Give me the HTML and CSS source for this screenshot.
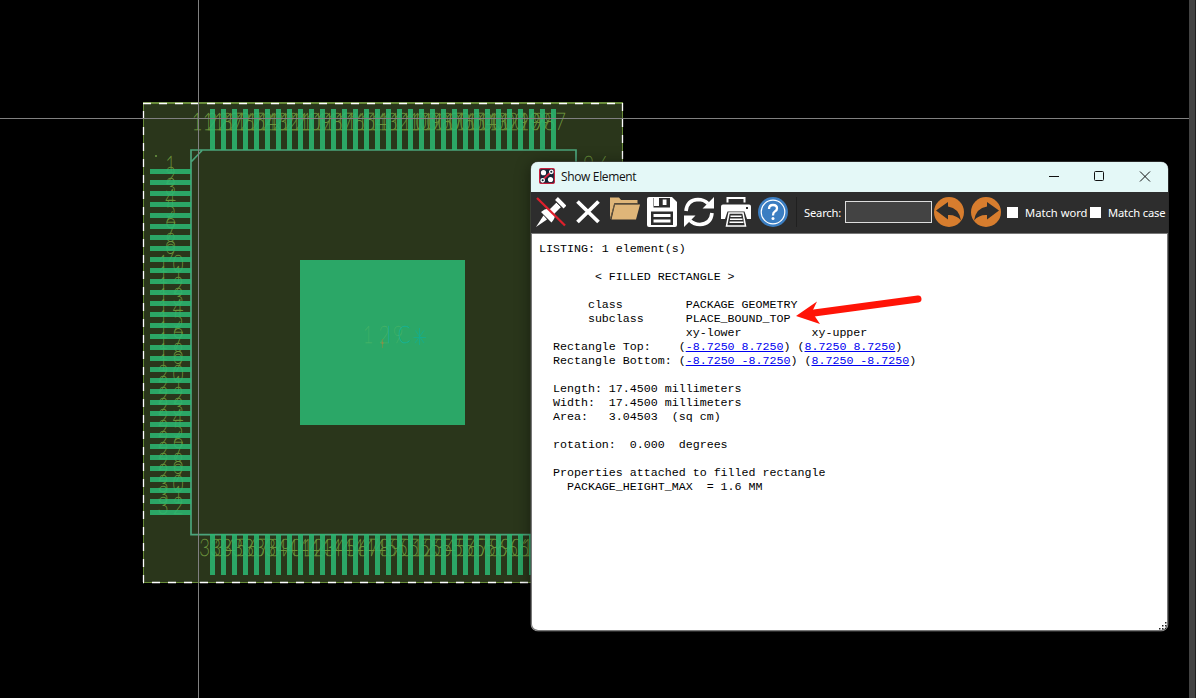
FILE: index.html
```html
<!DOCTYPE html>
<html lang="en">
<head>
<meta charset="utf-8">
<title>Show Element</title>
<link rel="stylesheet" href="styles.css">
</head>
<body>
<main class="workspace">
  <svg class="board" viewBox="0 0 1196 698" width="1196" height="698">
    <rect x="143" y="102" width="480" height="481" fill="#2a361b"/>
    <path class="edge" d="M143 102.5H623M143.5 102V582M622.5 102V582M143 582.5H623"/>
    <path class="edge" d="M143 103.5H623"/>
    <path class="dash" d="M143 103.5H623"/>
    <path class="dash" stroke-dashoffset="8" d="M143.5 103V582"/>
    <path class="dash" d="M622.5 103V582"/>
    <path class="dash" stroke-dashoffset="7" d="M143 582.5H623"/>
    <g id="labels" class="labels"></g>
    <path class="outline" d="M191 150H576V534.7H191ZM191.5 161.500L202 150.500"/>
    <g id="pads" class="pads"></g>
    <rect x="155" y="155" width="2" height="2" fill="#5b8138"/>
    <rect x="300" y="260" width="165" height="165" fill="#2ba767"/>
    <g class="center-text">
      <text class="refdes" transform="scale(.75 1)" x="490.7 512 530.7" y="343">129</text>
      <text class="part" transform="scale(.75 1)" x="518.7 539" y="343">IC</text>
      <path d="M419.500 328V345M413.500 337.500H426M415.500 330.500L424 343M424 330.500L415 343" fill="none" stroke="#13af90" stroke-width=".8"/>
      <path d="M382.500 339V348" stroke="#64974f"/><circle cx="382.500" cy="343" r="1.200" fill="#84914a"/>
    </g>
    <path class="cursor" d="M198.500 0V698M0 118.500H1189"/>
  </svg>
  <div class="scroll-edge"></div>

  <section class="window">
    <header class="titlebar">
      <svg width="16" height="16" viewBox="0 0 16 16"><rect x=".6" y=".6" width="14.800" height="14.800" rx="1.500" fill="#112637" stroke="#c7203d" stroke-width="1.200"/><path d="M4.500 11L11.500 4.500" stroke="#d4213c" stroke-width="1.800"/><circle cx="4.500" cy="4.700" r="2.600" fill="#fff"/><circle cx="11.500" cy="11.500" r="2.600" fill="#fff"/><g fill="#112637" stroke="#fff" stroke-width="1.300"><circle cx="12.300" cy="3.800" r="1.700"/><circle cx="3.700" cy="12.300" r="1.700"/></g></svg>
      <h1>Show Element</h1>
      <svg class="controls" width="110" height="14" viewBox="0 0 110 14"><path d="M4 7.500H14M95 2.500L105 12.500M105 2.500L95 12.500"/><rect x="49.500" y="2.500" width="9" height="9" rx="1"/></svg>
    </header>
    <div class="toolbar">
      <svg class="tool" viewBox="0 0 30 30"><path d="M0 30L7.500 18.500L11 22.500Z" fill="#fff"/><path d="M5 15Q10 10.500 14 12L20.500 5.500L25 10L18.500 16.500Q20 20.500 15.500 25.500Z" fill="#fff"/><path d="M20.500 1.500L29 10" stroke="#fff" stroke-width="4"/><path d="M19.500 4.500L26 11" stroke="#2d2d2d" stroke-width=".8"/><path d="M1 1L29 28.500" stroke="#df202c" stroke-width="2.300"/></svg>
      <svg class="tool" viewBox="0 0 30 30"><path d="M4.500 4.500L25.500 25M25.500 4.500L4.500 25" stroke="#fff" stroke-width="3.800"/></svg>
      <svg class="tool" viewBox="0 0 30 30"><path d="M0 22V0.500H9L11 3H27.500V6H4.500Z" fill="#dfb679"/><path d="M5 7.500H30L26 22.500H1.500Z" fill="#dfb679"/><path d="M.5 22L4.500 6.800H28" fill="none" stroke="#6b5a40" stroke-width="1"/></svg>
      <svg class="tool" viewBox="0 0 30 30"><path d="M2 0H25L30 5V28Q30 30 28 30H2Q0 30 0 28V2Q0 0 2 0Z" fill="#fff"/><path d="M6.500 1H23V10.500H6.500Z" fill="#2d2d2d"/><path d="M7 1H12V9H7Z" fill="#fff"/><path d="M15.700 2.500H19.500V8H15.700Z" fill="#fff"/><path d="M4 14.500H26V28H4Z" fill="#2d2d2d"/><path d="M6.500 17H23.500V20H6.500ZM6.500 22.500H23.500V25.500H6.500Z" fill="#fff"/></svg>
      <svg class="tool" viewBox="0 0 30 30"><path d="M2 14Q3 3 14 2.500Q20 2.500 24 6.500M28 16Q27 27 16 27.500Q10 27.500 6 23.500" fill="none" stroke="#fff" stroke-width="3.600"/><path d="M30 0V11.500H18.500ZM0 30V18.500H11.500Z" fill="#fff"/></svg>
      <svg class="tool" viewBox="0 0 30 30"><path d="M6.500 5.500V1H23.500V5.500" fill="none" stroke="#fff" stroke-width="2"/><path d="M2 7.500H28Q30 7.500 30 9.500V22H26L23.500 14.500H6.500L4 22H0V9.500Q0 7.500 2 7.500Z" fill="#fff"/><path d="M8 16H22L24.500 29H5.500ZM9.500 19.300H20.500M9 22.300H21.500M8.500 25.300H22.500" fill="none" stroke="#fff" stroke-width="1.500"/><rect x="25" y="10" width="2" height="2" fill="#2d2d2d"/></svg>
      <svg class="tool" viewBox="0 0 30 30"><circle cx="15" cy="15" r="15" fill="#3b7ec2"/><circle cx="15" cy="15" r="11.800" fill="none" stroke="#fff" stroke-width="1.200"/><path d="M11 12Q11 8 15 8Q19 8 19 11.500Q19 13.500 16.800 14.500Q15 15.500 15 18.500" fill="none" stroke="#fff" stroke-width="2.300"/><circle cx="15" cy="21.500" r="1.500" fill="#fff"/></svg>
      <span class="divider"></span>
      <label class="search"><span>Search:</span><input type="text"></label>
      <svg class="nav" viewBox="0 0 30 30"><circle cx="15" cy="15" r="15" fill="#d77d2e"/><path d="M2 13.500L14 5V9.500Q25 11 27 23.500Q22 17.500 14 18V22.500Z" fill="#2d2d2d"/></svg>
      <svg class="nav" viewBox="0 0 30 30"><circle cx="15" cy="15" r="15" fill="#d77d2e"/><path d="M28 13.500L16 5V9.500Q5 11 3 23.500Q8 17.500 16 18V22.500Z" fill="#2d2d2d"/></svg>
      <span class="check word"><i></i>Match word</span>
      <span class="check case"><i></i>Match case</span>
    </div>
<pre class="listing">LISTING: 1 element(s)

        &lt; FILLED RECTANGLE &gt;

       class         PACKAGE GEOMETRY
       subclass      PLACE_BOUND_TOP
                     xy-lower          xy-upper
  Rectangle Top:    (<a>-8.7250 8.7250</a>) (<a>8.7250 8.7250</a>)
  Rectangle Bottom: (<a>-8.7250 -8.7250</a>) (<a>8.7250 -8.7250</a>)

  Length: 17.4500 millimeters
  Width:  17.4500 millimeters
  Area:   3.04503  (sq cm)

  rotation:  0.000  degrees

  Properties attached to filled rectangle
    PACKAGE_HEIGHT_MAX  = 1.6 MM</pre>
    <svg class="grip" width="9" height="9" viewBox="0 0 9 9"><path d="M6 0h1.500v1.500h-1.500zM3 3h1.500v1.500h-1.500zM6 3h1.500v1.500h-1.500zM0 6h1.500v1.500h-1.500zM3 6h1.500v1.500h-1.500zM6 6h1.500v1.500h-1.500z" fill="#222"/></svg>
  </section>

  <svg class="arrow" width="126" height="32" viewBox="0 0 126 32"><path d="M122 5L18 19" stroke="#ff1407" stroke-width="7" stroke-linecap="round"/><path d="M0 22L21 7.500L16 18L24 30Z" fill="#ff1407"/></svg>
</main>
<script src="board.js"></script>
</body>
</html>
```

FILE: styles.css
```css
body { margin: 0; background: #000; }
.workspace { position: relative; width: 1196px; height: 698px; overflow: hidden; background: #000; }
.board { display: block; }
.edge { fill: none; stroke: #688b39; stroke-width: 1; }
.dash { fill: none; stroke: #fff; stroke-width: 1.300; stroke-dasharray: 8 8; }
.labels text, .center-text text { font: 100 24.500px Lato, "DejaVu Sans", sans-serif; text-anchor: middle; }
.labels text { fill: #6b943c; stroke: #6b943c; stroke-width: .55; }
.center-text .refdes { fill: #46b266; stroke: #46b266; stroke-width: .3; }
.center-text .part { fill: #13b397; stroke: #13b397; stroke-width: .5; }
.pads { fill: #2bb671; fill-opacity: .88; }
.outline { fill: none; stroke: #4ba47b; stroke-width: 1.700; }
.cursor { stroke: #808080; stroke-width: 1; }
.scroll-edge { position: absolute; top: 0; right: 0; width: 6px; height: 100%; background: #434343; border-right: 1px solid #222; }

.window { position: absolute; left: 531px; top: 162px; width: 637px; height: 469px; box-sizing: border-box; display: flex; flex-direction: column; overflow: hidden; border-radius: 7px; background: #fff; box-shadow: inset 0 0 0 1px #777, 0 0 0 .5px #555, 0 2px 16px rgba(0,0,0,.45); }
.titlebar { flex: none; height: 30px; box-sizing: border-box; padding: 0 13px 2px 8px; display: flex; align-items: center; background: #e4f8f7; }
.titlebar h1 { margin: 1px 0 0 6px; font: 12px "Open Sans", "Noto Sans", sans-serif; letter-spacing: -.35px; color: #111; }
.controls { margin-left: auto; fill: none; stroke: #111; stroke-width: 1; }
.toolbar { flex: none; height: 42px; box-sizing: border-box; padding: 5px 0 0 5px; display: flex; background: #2d2d2d; border-bottom: 1px solid #777; color: #fff; font: 11.200px/32px "Noto Sans", sans-serif; white-space: nowrap; }
.tool { flex: none; width: 30px; height: 30px; margin-right: 7px; }
.divider { flex: none; width: 1px; height: 30px; background: #202020; margin: 0 8px 0 1px; }
.search { flex: none; display: flex; align-items: flex-start; width: 130px; margin-left: -1px; }
.search span { flex: none; width: 41px; letter-spacing: -.2px; }
.search input { flex: none; width: 87px; height: 22px; padding: 0; margin-top: 4px; box-sizing: border-box; background: #434343; border: 1px solid #ddd; border-radius: 0; }
.nav { flex: none; width: 30px; height: 30px; margin-right: 7px; }
.check { flex: none; display: flex; width: 83px; }
.check.word { margin-left: -1px; }
.check.case { letter-spacing: -.15px; }
.check i { width: 11px; height: 11px; margin: 10px 7px 0 0; background: #fff; }
.listing { flex: 1; margin: 0; padding: 8px 8px 0; border: solid #777; border-width: 0 1px 1px 0; border-radius: 0 0 7px 7px; color: #000; font: 11.650px/14px "Liberation Mono", monospace; }
.listing a { color: #0000f0; text-decoration: underline; }
.grip { position: absolute; right: 0; bottom: 0; }
.arrow { position: absolute; left: 796px; top: 294px; }
```

FILE: board.js
```
const NS = "http://www.w3.org/2000/svg";
const pads = document.getElementById("pads");
const labels = document.getElementById("labels");
const PITCH = 11, SQUEEZE = 0.75, DIGIT = 15;

function pad(x, y, width, height) {
  const r = document.createElementNS(NS, "rect");
  Object.entries({ x, y, width, height }).forEach(([k, v]) => r.setAttribute(k, v));
  pads.append(r);
}

function label(number, cx, baseline) {
  const s = String(number);
  const t = document.createElementNS(NS, "text");
  const xs = [...s].map((_, i) => (cx + (i - (s.length - 1) / 2) * DIGIT) / SQUEEZE);
  t.setAttribute("x", xs.join(" "));
  t.setAttribute("y", baseline);
  t.setAttribute("transform", `scale(${SQUEEZE} 1)`);
  t.textContent = s;
  labels.append(t);
}

for (let i = 0; i < 32; i++) {
  const d = i * PITCH;
  pad(210 + d, 109, 5, 41);
  pad(210 + d, 534, 5, 41);
  pad(150, 169 + d, 41, 5);
  label(128 - i, 212 + d, 130);
  label(33 + i, 212 + d, 556);
  label(1 + i, 170.5, 173 + d);
}
label(96, 596, 173);
```
